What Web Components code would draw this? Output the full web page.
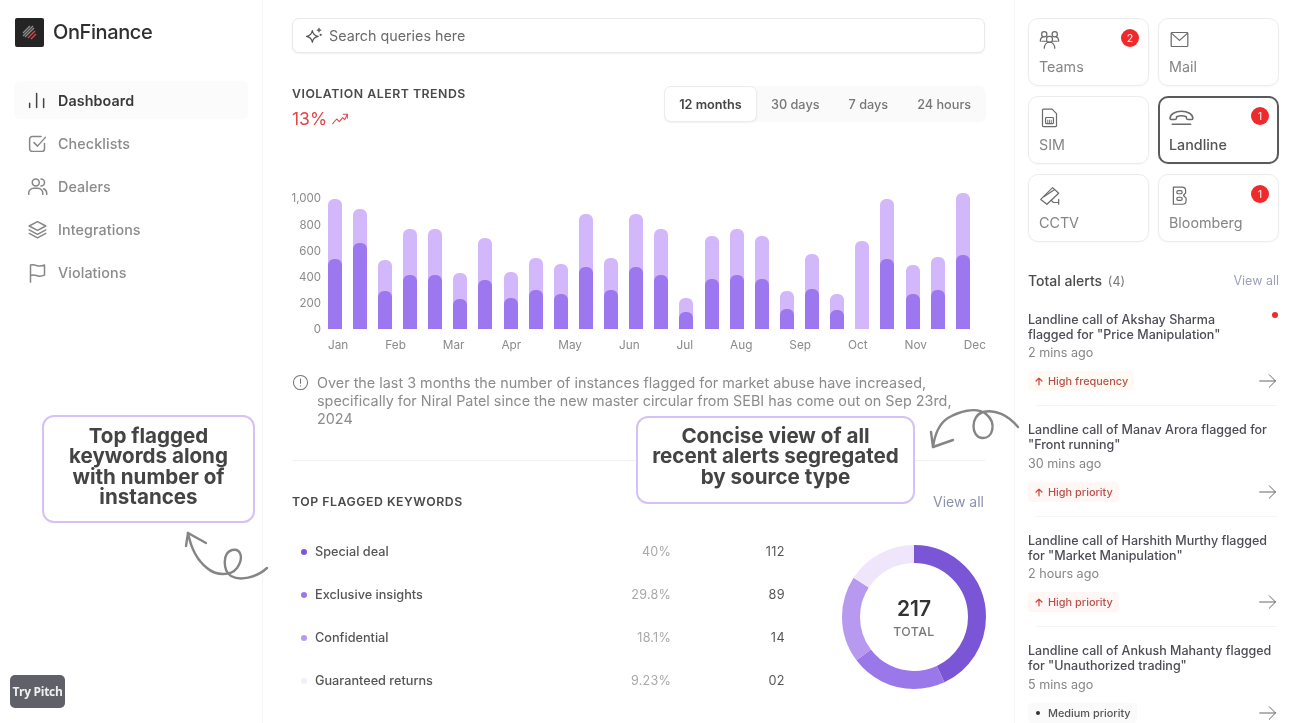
<!doctype html>
<html lang="en">
<head>
<meta charset="utf-8">
<title>OnFinance</title>
<style>
html,body{margin:0;padding:0;background:#fff}
body{font-family:Inter,"Liberation Sans",sans-serif;color:#444;width:1292px;height:723px;overflow:hidden}
</style>
</head>
<body>
<of-app></of-app>
<script>
const ICONS={
 dash:'<path d="M3 20v-5M11 20V4M19 20V10"/>',
 check:'<path d="M20 12v6a3 3 0 0 1-3 3H6a3 3 0 0 1-3-3V7a3 3 0 0 1 3-3h10"/><path d="M8 11l4 4 9-10"/>',
 users:'<circle cx="10" cy="7.5" r="4"/><path d="M2 21v-1.5A5.5 5.5 0 0 1 7.500 14h5a5.500 5.500 0 0 1 5.500 5.500V21"/><path d="M16 3.500a4 4 0 0 1 0 8M19 14.500a5.500 5.500 0 0 1 3.500 5V21"/>',
 layers:'<path d="M12 3 2.500 8l9.500 5 9.500-5z"/><path d="M2.500 12.500 12 17.500l9.500-5"/><path d="M2.500 16.500 12 21.500l9.500-5"/>',
 flag:'<path d="M4 23V3.500c4-1.500 6 .5 8.500 1s5 0 7.500-1v11.500c-2.500 1-5 1.500-7.500 1S8 14 4 15.500"/>',
 spark:'<path d="M10 5.500c.8 4.300 2.700 6.200 7 7-4.300.8-6.200 2.700-7 7-.8-4.300-2.700-6.200-7-7 4.300-.8 6.200-2.700 7-7z"/><path d="M18 3v4M16 5h4" stroke-width="1.600"/><circle cx="20" cy="10.500" r=".6"/>',
 info:'<circle cx="12" cy="12" r="10"/><path d="M12 7v6M12 16.500v.5"/>',
 trend:'<path d="M1 19l6-7 4 4 5-6 3 3 4-8"/><path d="M17 5h6v6"/>',
 teams:'<rect x="8.700" y="8.500" width="6.600" height="6.600" rx="2.600"/><path d="M6 22c.2-3.800 2.500-7 6-7s5.800 3.200 6 7"/><circle cx="6" cy="6" r="3"/><circle cx="18" cy="6" r="3"/><path d="M1.500 14c0-2.800 1.300-4.600 3.300-5.200M3.300 14H8M22.500 14c0-2.800-1.300-4.600-3.300-5.200M20.700 14H16"/>',
 mail:'<rect x="2.500" y="4" width="19" height="16" rx="1"/><path d="M3 5l9 8 9-8"/>',
 sim:'<path d="M5 2.500h10l5 5v14a1 1 0 0 1-1 1H5a1 1 0 0 1-1-1v-18a1 1 0 0 1 1-1z"/><rect x="7.500" y="12" width="9" height="7" rx="1"/><path d="M10 15v4M12 15v4M14 15v4" stroke-width="1"/>',
 landline:'<path d="M1 10.500c0-4 4.700-6.500 10.500-6.500S22 6.500 22 10.500c0 .8-.7 1-1.500 1h-3c-1 0-1.500-.5-1.500-1.500V9c-2.500-1-6.500-1-9 0v1c0 1-.5 1.500-1.500 1.500h-3C1.700 11.500 1 11.300 1 10.500z"/><path d="M3 16h17"/>',
 cctv:'<path d="M2 16.500 15.500 3l7 6.500L9 22z"/><path d="M5.500 13.500 17.500 5.500M14 17.500l2.500 2.500h6M22.500 16.500V22"/>',
 bloom:'<path d="M5 2.500h10a4 4 0 0 1 4 4v2.500l-2.500 3 3 3v3a4 4 0 0 1-4 4H5z"/><rect x="9" y="6.500" width="6" height="3.500" rx="1.500"/><rect x="9" y="14" width="6" height="3.500" rx="1.500"/>',
 arrow:'<path d="M2 12h19M13.500 4.500 21 12l-7.500 7.500"/>',
 up:'<path d="M12 21V5M5 12l7-7 7 7"/>'
};
const icon=(n,s,sw=1.7)=>`<svg width="${s}" height="${s}" viewBox="0 0 24 24" fill="none" stroke="currentColor" stroke-width="${sw}" stroke-linecap="round" stroke-linejoin="round" aria-hidden="true">${ICONS[n]}</svg>`;

class Base extends HTMLElement{
 constructor(){super();this.attachShadow({mode:'open'})}
 connectedCallback(){this.shadowRoot.innerHTML=this.render()}
}
const def=(n,c)=>customElements.define(n,c);

def('of-nav-item',class extends Base{render(){const a=this.hasAttribute('active');return `<style>
:host{display:flex;align-items:center;height:38px;margin-bottom:5px;width:234px;border-radius:6px;font-size:14.3px;font-weight:${a?600:500};color:${a?'#3a3a3a':'#8b8b8b'};background:${a?'#fbfbfb':'transparent'};letter-spacing:.1px}
.i{width:44px;display:flex;justify-content:center;padding-left:2px;box-sizing:border-box;color:${a?'#444':'#868686'}}
</style><span class="i">${icon(this.getAttribute('icon'),21,1.7)}</span><slot></slot>`}});

def('of-sidebar',class extends Base{render(){return `<style>
:host{display:block;box-sizing:border-box;border-right:1px solid #f5f5f5;padding:18px 0 0 14px;height:723px}
.brand{display:flex;align-items:center;gap:9px;height:28px;margin:0 0 35px 1px;font-size:20px;font-weight:500;color:#2f2f2f;letter-spacing:-.4px}
.logo{width:29px;height:29px;border-radius:2px;background:#242424;display:flex;align-items:center;justify-content:center}
</style>
<div class="brand"><span class="logo"><svg width="15" height="15" viewBox="0 0 15 15" fill="none" stroke-width="1.400"><path d="M1 8 8 1M1 11 11 1M3 12 12 3" stroke="#8d8d8d"/><path d="M6 13 13 6M9 14 14 9" stroke="#e0454a"/></svg></span><span>OnFinance</span></div>
<of-nav-item icon="dash" active>Dashboard</of-nav-item>
<of-nav-item icon="check">Checklists</of-nav-item>
<of-nav-item icon="users">Dealers</of-nav-item>
<of-nav-item icon="layers">Integrations</of-nav-item>
<of-nav-item icon="flag">Violations</of-nav-item>`}});

def('of-search',class extends Base{render(){return `<style>
:host{display:flex;align-items:center;gap:5px;box-sizing:border-box;height:35px;padding-left:11px;border:1px solid #e9e9e9;border-radius:7px;box-shadow:0 1px 2px rgba(0,0,0,.06);font-size:14.300px;color:#6a6a6a;background:#fff}
span{color:#555;display:flex}
</style><span>${icon('spark',20,1.5)}</span>Search queries here`}});

def('of-tabs',class extends Base{render(){return `<style>
:host{display:flex;align-items:center;height:36px;width:322px;box-sizing:border-box;background:#fafafa;border-radius:7px;font-size:12.700px;color:#777;font-weight:500}
b{font-weight:600;color:#444;box-sizing:border-box;width:93px;height:36px;background:#fff;border:1px solid #ececec;border-radius:7px;box-shadow:0 1px 2px rgba(0,0,0,.06);display:flex;align-items:center;justify-content:center}
span{margin-left:29px}
span:nth-of-type(1){margin-left:14px}
</style><b>12 months</b><span>30 days</span><span>7 days</span><span>24 hours</span>`}});

const BARS=[[58,236],[86,189],[240,334],[146,284],[146,284],[280,356],[175,299],[275,353],[234,331],[253,342],[101,260],[234,331],[101,260],[146,284],[353,396],[167,296],[146,284],[167,296],[334,386],[223,326],[342,390],[183,446],[58,237],[255,343],[231,330],[38,226]];
def('of-bar',class extends Base{render(){const l=+this.getAttribute('light'),d=+this.getAttribute('dark');return `<style>
:host{display:block;width:14px;position:relative;height:${l}px;background:#d2b8fb;border-radius:6px 6px 0 0;overflow:hidden}
i{display:${d?'block':'none'};position:absolute;left:0;right:0;bottom:0;height:${d}px;background:#9d77ef;border-radius:6px 6px 0 0}
</style><i></i>`}});

def('of-chart',class extends Base{render(){
 const ys=[['1,000',28.3],['800',26],['600',26],['400',26],['200',26],['0',26]];
 const ms='Jan Feb Mar Apr May Jun Jul Aug Sep Oct Nov Dec'.split(' ');
 return `<style>
:host{display:block;font-size:11.500px;color:#8a8a8a}
.plot{display:flex;height:158.300px}
.y{width:29px;display:flex;flex-direction:column;text-align:right}
.y span{display:flex;align-items:center;justify-content:flex-end;flex:none}
.bars{margin:9px 0 0 6.700px;height:136px;display:flex;align-items:flex-end;gap:11.140px}
.m{margin:-5.300px -2px 0 36px;display:flex;justify-content:space-between;line-height:16px;font-size:11.800px;padding-right:1px}
</style>
<div class="plot"><div class="y">${ys.map(y=>`<span style="height:${y[1]}px">${y[0]}</span>`).join('')}</div>
<div class="bars">${BARS.map(b=>`<of-bar light="${((446-b[0])/3).toFixed(1)}" dark="${((446-b[1])/3).toFixed(1)}"></of-bar>`).join('')}</div></div>
<div class="m">${ms.map(m=>`<span>${m}</span>`).join('')}</div>`}});

def('of-kw-row',class extends Base{render(){return `<style>
:host{display:grid;grid-template-columns:308px 71px 114px;align-items:center;height:43px;font-size:12.700px;font-weight:500;color:#555}
.k{display:flex;align-items:center;gap:8px;padding-left:9px}
i{width:6px;height:6px;border-radius:50%;background:${this.getAttribute('c')}}
.p{text-align:right;color:#a8a8a8;font-weight:400;font-size:12.600px;letter-spacing:.2px}
.n{text-align:right;color:#555;font-weight:400;letter-spacing:.4px}
</style><span class="k"><i></i><slot></slot></span><span class="p">${this.getAttribute('p')}</span><span class="n">${this.getAttribute('n')}</span>`}});

def('of-donut',class extends Base{render(){
 const seg=[['#7a55d6',0,155],['#9b78ea',155,233],['#b79af0',233,303],['#efe6fb',303,360]];
 return `<style>
:host{display:block;position:relative;width:144px;height:144px}
svg{display:block}
.c{position:absolute;inset:0;display:flex;flex-direction:column;align-items:center;justify-content:center}
b{font-size:21px;font-weight:600;color:#333;line-height:26px;margin-top:5px}
span{font-size:12.300px;color:#777;letter-spacing:.4px;line-height:20px;font-weight:500}
</style>
<svg width="144" height="144" viewBox="0 0 144 144">${seg.map(s=>`<circle cx="72" cy="72" r="63" fill="none" stroke="${s[0]}" stroke-width="18" pathLength="360" stroke-dasharray="${s[2]-s[1]} 360" stroke-dashoffset="${-s[1]}" transform="rotate(-90 72 72)"/>`).join('')}</svg>
<div class="c"><b>217</b><span>TOTAL</span></div>`}});

def('of-main',class extends Base{render(){return `<style>
:host{display:block;box-sizing:border-box;padding:18px 29px 0;height:723px}
.head{display:flex;justify-content:space-between;margin-top:33px;height:97.700px}
h2{margin:0;font-size:12.300px;font-weight:600;color:#4a4a4a;letter-spacing:.52px;line-height:16px}
.pc{display:flex;align-items:center;gap:5px;margin-top:5px;font-size:17.500px;color:#e2474a;line-height:24px}
.pc span{display:flex}
.tabs-wrap{margin-right:-1px}
.note{display:flex;gap:8px;margin-top:21px;font-size:14.390px;line-height:18px;color:#8b8b8b}
.note>span{color:#777;display:flex;flex:none;height:18px}
.note p{margin:0;white-space:pre-line}
hr{border:0;border-top:1px solid #f1f1f1;margin:32px 0 31px}
.kh{display:flex;justify-content:space-between;align-items:center;height:20px}
.kh a{font-size:14px;color:#8d91ad;padding-right:1px}
.kw{display:flex;justify-content:space-between;margin-top:18.500px}
.t{width:493px}
of-donut{margin:14.500px -1px 0 0}
</style>
<of-search></of-search>
<div class="head"><div><h2>VIOLATION ALERT TRENDS</h2><div class="pc">13%<span>${icon('trend',16,1.6)}</span></div></div><div class="tabs-wrap"><of-tabs></of-tabs></div></div>
<of-chart></of-chart>
<div class="note"><span>${icon('info',17,1.500)}</span><p>Over the last 3 months the number of instances flagged for market abuse have increased,
specifically for Niral Patel since the new master circular from SEBI has come out on Sep 23rd,
2024</p></div>
<hr>
<div class="kh"><h2>TOP FLAGGED KEYWORDS</h2><a>View all</a></div>
<div class="kw"><div class="t">
<of-kw-row c="#7a55d6" p="40%" n="112">Special deal</of-kw-row>
<of-kw-row c="#9b78ea" p="29.8%" n="89">Exclusive insights</of-kw-row>
<of-kw-row c="#b79af0" p="18.1%" n="14">Confidential</of-kw-row>
<of-kw-row c="#f3edfc" p="9.23%" n="02">Guaranteed returns</of-kw-row>
</div><of-donut></of-donut></div>`}});

def('of-source',class extends Base{render(){const a=this.hasAttribute('active'),b=this.getAttribute('badge'),n=this.getAttribute('icon');return `<style>
:host{display:block;position:relative;box-sizing:border-box;height:68px;border:${a?'2px solid #5a5a5a':'1px solid #ececec'};border-radius:10px;padding:${a?'9px 0 0 9px':'10px 0 0 10px'};font-size:14.300px;color:${a?'#555':'#858585'};font-weight:${a?500:400};box-shadow:0 1px 2px rgba(0,0,0,.03)}
.i{display:block;height:22px;color:#6a6a6a}
.l{display:block;margin-top:6px;line-height:20px}
b{position:absolute;top:${a?9:10}px;right:${a?8:9}px;width:18px;height:18px;border-radius:50%;background:#ee2a2c;color:#ffd9d9;font-size:10.500px;font-weight:500;display:flex;align-items:center;justify-content:center}
</style><span class="i">${icon(n,n==='landline'?26:21,1.4)}</span><span class="l"><slot></slot></span>${b?`<b>${b}</b>`:''}`}});

def('of-tag',class extends Base{render(){const k=this.getAttribute('kind');const bg={f:'#fffaf3',p:'#fef7f6',m:'#fafafb'}[k];return `<style>
:host{display:inline-flex;align-items:center;gap:4px;height:20px;padding:0 6px;border-radius:4px;background:${bg};font-size:10.900px;font-weight:500;color:${k==='m'?'#555':'#b8504a'}}
i{width:4px;height:4px;border-radius:50%;background:#333;margin:0 4px 0 2px}
svg{display:block}
</style>${k==='m'?'<i></i>':`<span style="display:flex;color:#d2483f">${icon('up',10,3)}</span>`}<slot></slot>`}});

def('of-alert',class extends Base{render(){return `<style>
:host{display:block;position:relative;box-sizing:border-box;height:110.500px}
.t{font-size:12.500px;font-weight:500;line-height:15px;color:#4c4c55;white-space:pre-line}
.w{margin-top:2.500px;font-size:12.600px;line-height:18px;color:#858585}
.r{display:flex;justify-content:space-between;align-items:center;margin-top:9px;height:20px;color:#666}
.r span{display:flex;margin-right:1px}
.d{position:absolute;right:1px;top:0;width:6px;height:6px;border-radius:50%;background:#ef2b2b}
</style><div class="t">${this.getAttribute('t')}</div><div class="w">${this.getAttribute('w')}</div>
<div class="r"><of-tag kind="${this.getAttribute('k')}">${this.getAttribute('l')}</of-tag><span>${icon('arrow',20,1.200)}</span></div>${this.hasAttribute('dot')?'<i class="d"></i>':''}`}});

def('of-right',class extends Base{render(){return `<style>
:host{display:block;box-sizing:border-box;border-left:1px solid #f5f5f5;padding:18px 13px 0 13px;height:723px;overflow:hidden}
.g{display:grid;grid-template-columns:121px 121px;grid-auto-rows:68px;column-gap:9px;row-gap:10px}
.h{display:flex;justify-content:space-between;align-items:center;height:20px;margin:28.500px 0 21px}
.h b{font-size:14px;font-weight:500;color:#4b4b4b}
.h b small{font-size:12.500px;font-weight:400;color:#777;margin-left:2px}
.h a{font-size:12.500px;color:#9ca0bd}
.a{position:relative}
.s{height:1px;background:#f5f5f5;position:absolute;left:8px;right:2px}
</style>
<div class="g">
<of-source icon="teams" badge="2">Teams</of-source><of-source icon="mail">Mail</of-source>
<of-source icon="sim">SIM</of-source><of-source icon="landline" badge="1" active>Landline</of-source>
<of-source icon="cctv">CCTV</of-source><of-source icon="bloom" badge="1">Bloomberg</of-source>
</div>
<div class="h"><b>Total alerts <small>(4)</small></b><a>View all</a></div>
<div class="a">
<of-alert dot t="Landline call of Akshay Sharma&#10;flagged for &quot;Price Manipulation&quot;" w="2 mins ago" k="f" l="High frequency"></of-alert>
<of-alert t="Landline call of Manav Arora flagged for&#10;&quot;Front running&quot;" w="30 mins ago" k="p" l="High priority"></of-alert>
<of-alert t="Landline call of Harshith Murthy flagged&#10;for &quot;Market Manipulation&quot;" w="2 hours ago" k="p" l="High priority"></of-alert>
<of-alert t="Landline call of Ankush Mahanty flagged&#10;for &quot;Unauthorized trading&quot;" w="5 mins ago" k="m" l="Medium priority"></of-alert>
<div class="s" style="top:93.500px"></div><div class="s" style="top:204px"></div><div class="s" style="top:314px"></div>
</div>`}});

def('of-callout',class extends Base{render(){return `<style>
:host{display:flex;align-items:center;justify-content:center;position:absolute;box-sizing:border-box;background:#fff;border:2px solid #d6c1f6;border-radius:12px;text-align:center;font-family:Inter,sans-serif;font-weight:700;font-size:20.600px;line-height:20.500px;color:#444;white-space:pre-line;padding-bottom:${this.getAttribute('pb')}px}
</style><slot></slot>`}});

def('of-try',class extends Base{render(){return `<style>
:host{position:absolute;left:10px;top:675px;width:55px;height:33px;border-radius:5px;background:#5f6068;color:#f0f0f0;font:700 12px "Open Sans",sans-serif;display:flex;align-items:center;justify-content:center;letter-spacing:-.3px}
</style><slot></slot>`}});

def('of-app',class extends Base{render(){return `<style>
:host{display:grid;grid-template-columns:263px 751px 278px;width:1292px;height:723px;position:relative;overflow:hidden;background:#fff;filter:blur(.35px)}
.ar{position:absolute;left:0;top:0;pointer-events:none}
</style>
<of-sidebar></of-sidebar><of-main></of-main><of-right></of-right>
<of-callout pb="5" style="left:42px;top:415px;width:213px;height:108px">Top flagged
keywords along
with number of
instances</of-callout>
<of-callout pb="7" style="left:636px;top:416px;width:279px;height:88px">Concise view of all
recent alerts segregated
by source type</of-callout>
<svg class="ar" width="1292" height="723" fill="none" stroke="#858585" stroke-width="2.400" stroke-linecap="round" stroke-linejoin="round" aria-hidden="true">
<path d="M267 568C256 578 240 581 231 576C223 571 222 553 232 550C241 548 244 558 237 568C231 576 216 576 207 568C198 561 191 548 188 533"/><path d="M186 546L188 533L206 543"/>
<path d="M1018 427C1008 415 995 409 983 412C970 416 971 437 982 438C993 439 997 423 986 414C976 406 958 412 948 418C940 423 935 433 933 447"/><path d="M931 432L933 447L953 440"/>
</svg>
<of-try>Try Pitch</of-try>`}});
</script>
</body>
</html>
